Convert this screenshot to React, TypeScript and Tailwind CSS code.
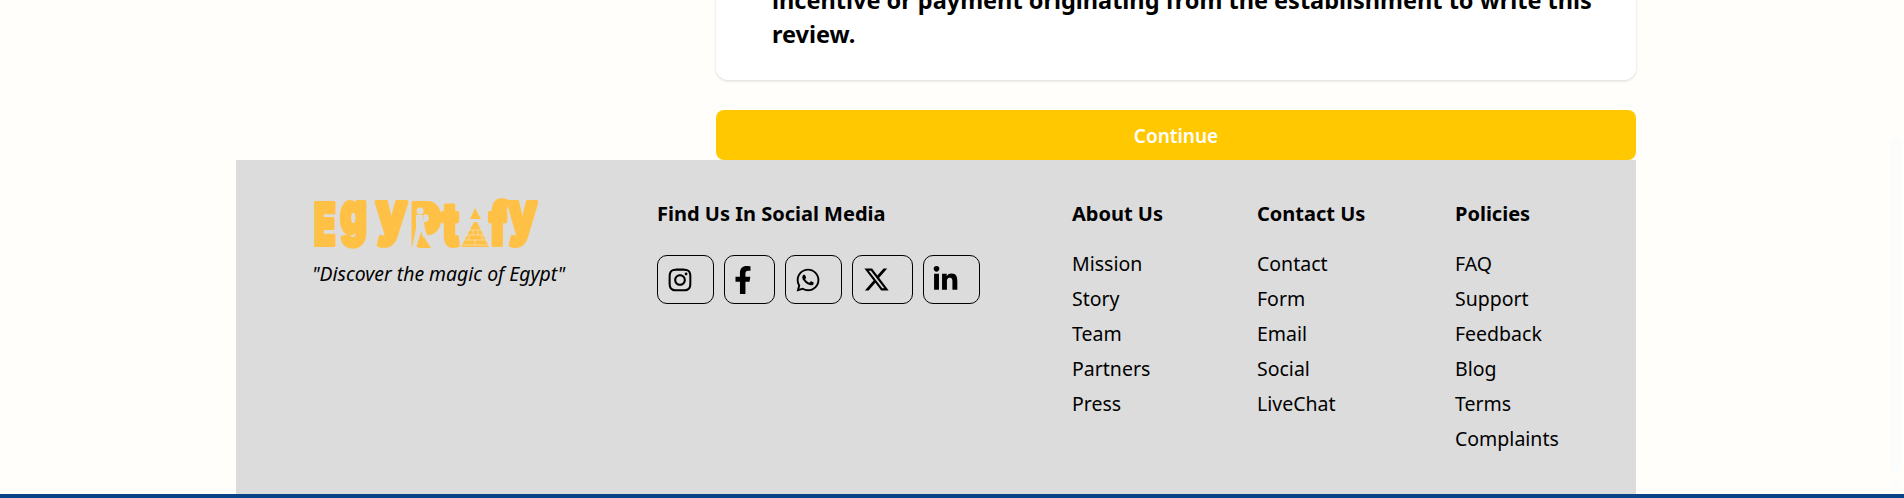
import { FaFacebookF, FaInstagram, FaLinkedinIn, FaWhatsapp } from 'react-icons/fa';
import { FaXTwitter } from 'react-icons/fa6';

const columns = [
  { title: 'About Us', width: 'w-[185px]', links: ['Mission', 'Story', 'Team', 'Partners', 'Press'] },
  { title: 'Contact Us', width: 'w-[198px]', links: ['Contact', 'Form', 'Email', 'Social', 'LiveChat'] },
  { title: 'Policies', width: '', links: ['FAQ', 'Support', 'Feedback', 'Blog', 'Terms', 'Complaints'] },
];

const socials = [
  { icon: <FaInstagram size={26} />, width: 'w-[57px]', pad: 'pl-[9px]' },
  { icon: <FaFacebookF size={28} />, width: 'w-[51px]', pad: 'pl-[4px]' },
  { icon: <FaWhatsapp size={26} />, width: 'w-[57px]', pad: 'pl-[9px]' },
  { icon: <FaXTwitter size={27} />, width: 'w-[61px]', pad: 'pl-[10px]' },
  { icon: <FaLinkedinIn size={27} />, width: 'w-[57px]', pad: 'pl-[8px]' },
];

const logoLetters = [
  { ch: 'E', x: 2, y: 45, w: 22 },
  { ch: 'g', x: 28, y: 34, w: 27 },
  { ch: 'y', x: 64, y: 34, w: 31 },
  { ch: 'P', x: 99, y: 45, w: 30 },
  { ch: 't', x: 130, y: 45, w: 17 },
  { ch: 'f', x: 177, y: 45, w: 18 },
  { ch: 'y', x: 196, y: 34, w: 29 },
];

function Logo() {
  return (
    <svg width="228" height="92" viewBox="0 -20 228 92" className="-my-[20px] block">
      {logoLetters.map((l, i) => (
        <text key={i} x={l.x} y={l.y} textLength={l.w} lengthAdjust="spacingAndGlyphs" fill="#ffc145" stroke="#ffc145" strokeWidth="4" strokeLinejoin="round" fontFamily="Inter, sans-serif" fontWeight="900" fontSize="58">{l.ch}</text>
      ))}
      {/* pyramid */}
      <polygon points="149,47 162,22 165,22 177,47" fill="#ffc145" />
      <polygon points="158,19 163,8 169,19" fill="#ffc145" />
      <g stroke="#f4e3b8" strokeWidth="0.7">
        <path d="M156 30h15M153 35h21M151 40h25M149 45h28" />
        <path d="M161 30v5M166 30v5M157 35v5M170 35v5M163 40v5" />
      </g>
      {/* walker with suitcase */}
      <g fill="#dcdcdc">
        <circle cx="108" cy="11" r="3.5" />
        <path d="M104 15h7l2 14 6 18h-3l-7-15-5 16h-4l4-20z" />
        <path d="M92 37l6 3-6 9h-5z" />
      </g>
      <polygon points="106,48 112,37 119,48" fill="#ffc145" />
    </svg>
  );
}

export default function App() {
  return (
    <div className="relative h-[498px] overflow-hidden bg-[#fffefa] font-['Noto_Sans','Open_Sans',sans-serif] text-black">
      <div className="ml-[716px] w-[920px]">
        <div className="-mt-[17px] h-[97px] rounded-b-xl bg-white pl-[56px] pr-4 text-[23.5px] leading-[34px] font-bold shadow-[0_1px_3px_rgba(0,0,0,0.15)]">
          <p>incentive or payment originating from the establishment to write this review.</p>
        </div>
        <button className="mt-[30px] block h-[50px] w-full rounded-lg bg-[#ffc800] pt-[2px] text-[19px] font-semibold text-white">Continue</button>
      </div>
      <footer className="ml-[236px] flex h-[334px] w-[1400px] bg-[#dcdcdc] pt-[40px]">
        <div className="ml-[76px] w-[345px]">
          <Logo />
          <p className="mt-[8px] text-[19.4px] leading-[28px] italic">"Discover the magic of Egypt"</p>
        </div>
        <div className="w-[415px]">
          <h3 className="text-[20px] leading-[28px] font-bold">Find Us In Social Media</h3>
          <div className="mt-[27px] flex gap-[10px]">
            {socials.map((s, i) => (
              <a key={i} className={`flex h-[49px] items-center rounded-[10px] border border-black ${s.pad} ${s.width}`}>{s.icon}</a>
            ))}
          </div>
        </div>
        {columns.map((c) => (
          <div key={c.title} className={c.width}>
            <h3 className="text-[20px] leading-[28px] font-bold">{c.title}</h3>
            <ul className="mt-[18px] text-[19.5px] leading-[35px]">
              {c.links.map((l) => <li key={l}>{l}</li>)}
            </ul>
          </div>
        ))}
      </footer>
      <div className="h-[4px] bg-[#0a4487]" />
      <div className="absolute top-[137px] right-[3px] h-[335px] w-[11px] rounded-full bg-[#fbfdfc]" />
      <svg width="11" height="9" viewBox="0 0 11 9" className="absolute top-[481px] right-[3px]">
        <polygon points="0,0 11,0 5.5,9" fill="#fbfdfc" />
      </svg>
    </div>
  );
}
